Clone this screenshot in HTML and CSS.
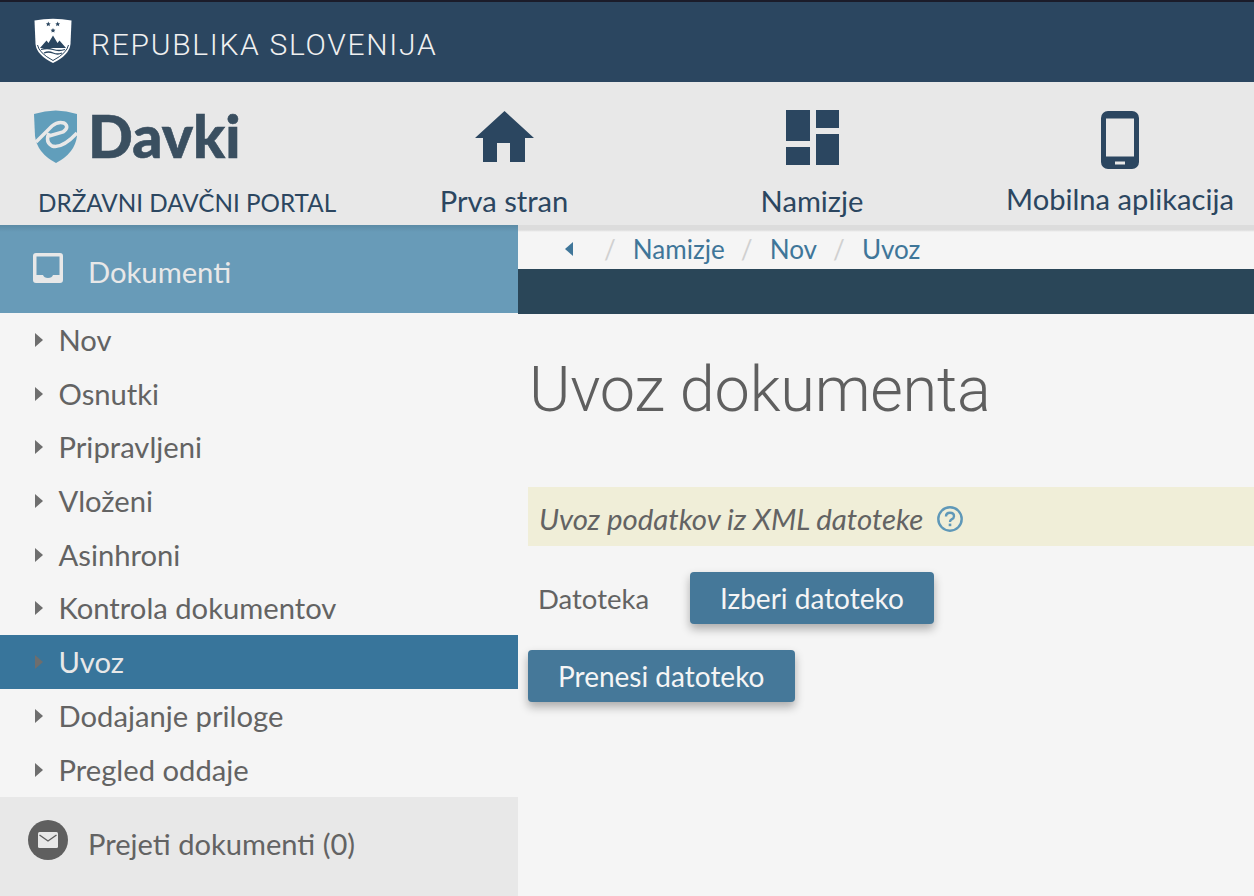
FILE: index.html
```html
<!DOCTYPE html>
<html lang="sl">
<head>
    <meta charset="UTF-8">
    <meta name="viewport" content="width=device-width, initial-scale=1.0">
    <title>eDavki</title>
    <link rel="stylesheet" href="styles.css">
</head>
<body>
    <!-- Top bar -->
    <div class="gov-bar">
        <svg class="crest" viewBox="0 0 38 45" width="38" height="45">
            <path d="M0.5 2.5 Q19 -1 37.5 2.5 L36.5 26 Q35.5 37 19 45 Q2.5 37 1.5 26 Z" fill="#fff"/>
            <path d="M3.5 27 Q5 35 19 42.5 Q33 35 34.500 27" fill="none" stroke="#2b4660" stroke-width="1"/>
            <path d="M6 30 L12.500 22.500 L14.500 25 L19 17.500 L23.500 25 L25.500 22.500 L32 30 Z" fill="#2b4660"/>
            <path d="M7 31.500 Q13 29.500 19 31.500 T31 31.500 M10 35 Q14.500 33 19 35 T28 35" fill="none" stroke="#2b4660" stroke-width="1.300"/>
            <path d="M14.300 3.600 l.7 1.600 1.700.2 -1.200 1.100 .3 1.700 -1.500 -.9 -1.500 .9 .3 -1.700 -1.200 -1.100 1.700 -.2Z M23.700 3.600 l.7 1.600 1.700.2 -1.200 1.100 .3 1.700 -1.500 -.9 -1.500 .9 .3 -1.700 -1.200 -1.100 1.700 -.2Z M19 10 l.7 1.600 1.700.2 -1.200 1.100 .3 1.700 -1.500 -.9 -1.500 .9 .3 -1.700 -1.200 -1.100 1.700 -.2Z" fill="#2b4660"/>
        </svg>
        <span class="gov-name">REPUBLIKA SLOVENIJA</span>
    </div>

    <!-- Header -->
    <div class="header">
        <div class="brand">
            <div class="logo">
                <svg viewBox="0 0 44 54" width="44" height="54">
                    <path d="M0 5 Q22 -2 43 5 L43 27 Q41 44 22 54 Q3 44 1 27 Z" fill="#619ebb"/>
                    <path d="M2 33 L18 17 Q24 12 30 14 Q36 18 29 23 L15 27" fill="none" stroke="#e8e8e8" stroke-width="3.500"/>
                    <path d="M15 24 Q11 33 18 37 Q28 40 43 24" fill="none" stroke="#e8e8e8" stroke-width="3.500"/>
                </svg>
                <span class="logo-text">Davki</span>
            </div>
            <div class="brand-sub">DRŽAVNI DAVČNI PORTAL</div>
        </div>
        <a class="nav-item nav-home" href="#home">
            <svg viewBox="0 0 59 51" width="59" height="51">
                <path d="M29.500 0 L59 27 L50 27 L50 51 L35 51 L35 32 L22 32 L22 51 L8 51 L8 27 L0 27 Z" fill="#2b4660"/>
            </svg>
            <span>Prva stran</span>
        </a>
        <a class="nav-item nav-desk" href="#namizje">
            <svg viewBox="0 0 53 55" width="53" height="55">
                <path d="M0 0 H24 V31 H0 Z M30 0 H53 V18 H30 Z M30 24 H53 V55 H30 Z M0 37 H24 V55 H0 Z" fill="#2b4660"/>
            </svg>
            <span>Namizje</span>
        </a>
        <a class="nav-item nav-mobile" href="#mobile">
            <svg viewBox="0 0 38 58" width="38" height="58">
                <rect width="38" height="58" rx="7" fill="#2b4660"/>
                <rect x="5" y="7.500" width="28" height="38" fill="#e8e8e8"/>
                <rect x="14" y="50.500" width="10" height="3" fill="#e8e8e8"/>
            </svg>
            <span>Mobilna aplikacija</span>
        </a>
    </div>

    <div class="layout">
        <!-- Side menu -->
        <div class="sidebar">
            <div class="side-head">
                <svg viewBox="0 0 30 30" width="30" height="30">
                    <path fill-rule="evenodd" d="M3 0 H27 Q30 0 30 3 V27 Q30 30 27 30 H3 Q0 30 0 27 V3 Q0 0 3 0 Z M3.500 3.500 V22 H10 Q11 25 15 25 Q19 25 20 22 H26.500 V3.500 Z" fill="#e8e8e8"/>
                </svg>
                <span>Dokumenti</span>
            </div>
            <ul class="side-menu">
                <li>Nov</li>
                <li>Osnutki</li>
                <li>Pripravljeni</li>
                <li>Vloženi</li>
                <li>Asinhroni</li>
                <li>Kontrola dokumentov</li>
                <li class="active">Uvoz</li>
                <li>Dodajanje priloge</li>
                <li>Pregled oddaje</li>
            </ul>
            <div class="side-foot">
                <span class="mail-icon">
                    <svg viewBox="0 0 20 16" width="20" height="16">
                        <rect x="0" y="0" width="20" height="16" rx="1.500" fill="#e8e8e8"/>
                        <path d="M1.500 3 L10 9 L18.500 3" fill="none" stroke="#5f5f5f" stroke-width="1.400"/>
                    </svg>
                </span>
                <span>Prejeti dokumenti (0)</span>
            </div>
        </div>

        <!-- Main content -->
        <div class="main">
            <div class="breadcrumb">
                <span class="back"></span>
                <span class="sep">/</span><a href="#namizje">Namizje</a>
                <span class="sep">/</span><a href="#nov">Nov</a>
                <span class="sep">/</span><a href="#uvoz">Uvoz</a>
            </div>
            <div class="dark-strip"></div>
            <div class="content">
                <h1>Uvoz dokumenta</h1>
                <div class="notice">
                    <em>Uvoz podatkov iz XML datoteke</em>
                    <svg viewBox="0 0 26 26" width="26" height="26">
                        <circle cx="13" cy="13" r="11.700" fill="none" stroke="#5f98b8" stroke-width="2.400"/>
                        <path d="M9 10.500 Q9 6.800 13 6.800 Q17 6.800 17 10.200 Q17 12.200 14.600 13.400 Q13 14.200 13 16" fill="none" stroke="#5f98b8" stroke-width="2.400"/>
                        <rect x="11.700" y="17.600" width="2.600" height="2.600" fill="#5f98b8"/>
                    </svg>
                </div>
                <div class="file-row">
                    <label>Datoteka</label>
                    <button class="btn">Izberi datoteko</button>
                </div>
                <button class="btn btn-send">Prenesi datoteko</button>
            </div>
        </div>
    </div>
</body>
</html>
```

FILE: styles.css
```css
html, body {
    height: 100%;
}
body {
    font-family: Lato, "Open Sans", sans-serif;
    margin: 0;
    padding: 0;
    background-color: #f5f5f5;
    color: #636363;
    overflow: hidden;
}
.gov-bar {
    height: 80px;
    background-color: #2b4660;
    border-top: 2px solid #1b1c2a;
    display: flex;
    align-items: center;
    padding-left: 34px;
}
.crest {
    margin-top: -3px;
}
.gov-name {
    font-family: Roboto, sans-serif;
    font-weight: 300;
    font-size: 30px;
    letter-spacing: 1.700px;
    color: #f0f0f0;
    margin: 4px 0 0 19px;
}
.header {
    height: 143px;
    background-color: #e8e8e8;
    display: flex;
    overflow: hidden;
}
.brand {
    width: 350px;
    flex: none;
    padding-left: 34px;
    box-sizing: border-box;
}
.logo {
    display: flex;
    align-items: center;
    height: 54px;
    margin-top: 27px;
}
.logo-text {
    font-weight: 900;
    font-size: 59px;
    line-height: 54px;
    color: #3a4f60;
    margin-left: 10px;
    -webkit-text-stroke: 0.6px #3a4f60;
}
.brand-sub {
    margin: 26px 0 0 4px;
    font-size: 24.250px;
    line-height: 28px;
    color: #2b4660;
    white-space: nowrap;
}
.nav-item {
    width: 308px;
    flex: none;
    text-decoration: none;
    color: #2b4660;
    font-size: 29.150px;
    display: flex;
    flex-direction: column;
    align-items: center;
    box-sizing: border-box;
}
.nav-item span {
    line-height: 34px;
}
.nav-home {
    padding-top: 29px;
}
.nav-home span {
    margin-top: 22px;
}
.nav-desk {
    padding-top: 28px;
}
.nav-desk span {
    margin-top: 19px;
}
.nav-mobile {
    padding-top: 29px;
}
.nav-mobile span {
    margin-top: 13px;
}
.layout {
    display: flex;
    height: 671px;
}
.sidebar {
    width: 518px;
    flex: none;
    display: flex;
    flex-direction: column;
}
.side-head {
    height: 88px;
    background: linear-gradient(#5c8ba5, #689bb8 7px);
    padding-top: 5px;
    box-sizing: border-box;
    display: flex;
    align-items: center;
    padding-left: 33px;
    color: #e8e8e8;
    font-size: 29.200px;
    gap: 25px;
}
.side-head svg {
    margin-top: -8px;
}
.side-menu {
    list-style: none;
    margin: 0;
    padding: 0 0 0.5px;
}
.side-menu li {
    height: 53.700px;
    line-height: 53.700px;
    font-size: 29.200px;
    padding-left: 58.500px;
    position: relative;
}
.side-menu li::before {
    content: "";
    position: absolute;
    left: 35px;
    top: 20px;
    border-left: 8px solid #6e6e6e;
    border-top: 7.500px solid transparent;
    border-bottom: 7.500px solid transparent;
}
.side-menu li.active {
    background-color: #38759b;
    color: #e8e8e8;
}
.side-foot {
    flex: 1;
    background-color: #e8e8e8;
    display: flex;
    align-items: flex-start;
    padding: 23px 0 0 28px;
    font-size: 29.100px;
    gap: 20px;
}
.side-foot span:last-child {
    line-height: 48px;
}
.mail-icon {
    width: 40px;
    height: 40px;
    border-radius: 50%;
    background-color: #5f5f5f;
    display: flex;
    align-items: center;
    justify-content: center;
}
.main {
    flex: 1;
    min-width: 0;
}
.breadcrumb {
    height: 44px;
    background: linear-gradient(#dcdcdc 5px, #f5f5f5 7px);
    padding: 5px 0 2px 47px;
    box-sizing: border-box;
    font-size: 26.100px;
    display: flex;
    align-items: center;
    color: #d0d0d0;
}
.breadcrumb a {
    color: #3f7699;
    text-decoration: none;
}
.back {
    width: 0;
    border-right: 8px solid #3f7699;
    border-top: 7.500px solid transparent;
    border-bottom: 7.500px solid transparent;
    margin-right: 31px;
}
.sep {
    margin: 0 17px 0 0;
}
.breadcrumb a + .sep {
    margin-left: 16px;
}
.dark-strip {
    height: 45px;
    background-color: #2a4658;
}
.content {
    padding-left: 10px;
}
h1 {
    margin: 0;
    padding: 36px 0 0 1px;
    font-family: Roboto, sans-serif;
    font-weight: 300;
    font-size: 63px;
    letter-spacing: -0.250px;
    line-height: 80px;
    color: #5f5f5f;
    height: 137px;
    box-sizing: content-box;
}
.notice {
    height: 55px;
    padding: 4px 0 0 11px;
    background-color: #f0eed8;
    display: flex;
    align-items: center;
    font-size: 29.400px;
    gap: 14px;
}
.file-row {
    display: flex;
    align-items: center;
    margin-top: 26px;
    margin-bottom: 26px;
    padding-left: 10px;
}
.file-row label {
    width: 152px;
    font-size: 27.500px;
}
.btn {
    font-family: Lato, sans-serif;
    font-size: 28px;
    height: 52px;
    padding: 0 30px;
    border: none;
    border-radius: 4px;
    background-color: #457899;
    color: #f5f5f5;
    box-shadow: 0 5px 10px rgba(0, 0, 0, 0.3);
    display: block;
}
.btn-send {
    padding-right: 31px;
}
```
